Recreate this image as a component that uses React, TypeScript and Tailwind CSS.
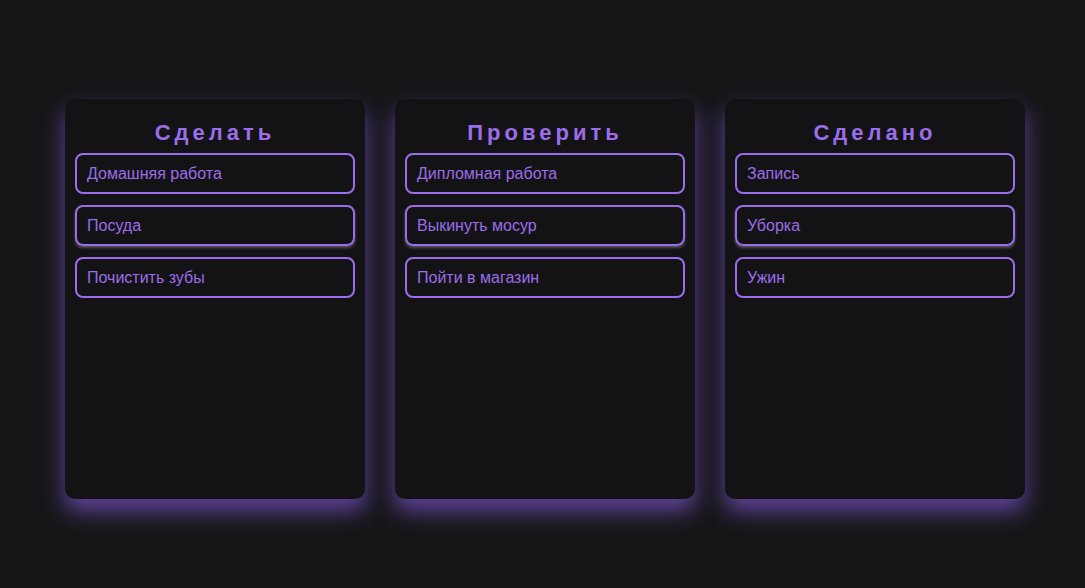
const columns = [
  { title: "Сделать", items: ["Домашняя работа", "Посуда", "Почистить зубы"] },
  { title: "Проверить", items: ["Дипломная работа", "Выкинуть мосур", "Пойти в магазин"] },
  { title: "Сделано", items: ["Запись", "Уборка", "Ужин"] },
];

export default function App() {
  return (
    <div
      className="min-h-[588px] w-full bg-[#161618] pt-[99px] pl-[65px]"
      style={{ fontFamily: '"Liberation Sans", Arial, sans-serif' }}
    >
      <div className="flex gap-[30px]">
        {columns.map((col) => (
          <div
            key={col.title}
            className="flex h-[400px] w-[300px] flex-col rounded-[10px] bg-[#131315] px-[10px] pt-[21px] shadow-[0_12px_22px_rgba(125,85,210,0.7)]"
          >
            <h2 className="mb-[7px] text-center text-[22px] font-bold leading-[26px] tracking-[4px] text-[#9b6dea]">
              {col.title}
            </h2>
            <div className="flex flex-col gap-[11px]">
              {col.items.map((item, i) => (
                <div
                  key={item}
                  className={`flex h-[41px] items-center rounded-[8px] border-2 border-[#9b6dea] px-[10px] pt-[1px] text-[16px] text-[#9b6dea] ${
                    i === 1 ? "shadow-[0_2px_3px_rgba(210,200,230,0.35)]" : ""
                  }`}
                >
                  {item}
                </div>
              ))}
            </div>
          </div>
        ))}
      </div>
    </div>
  );
}
